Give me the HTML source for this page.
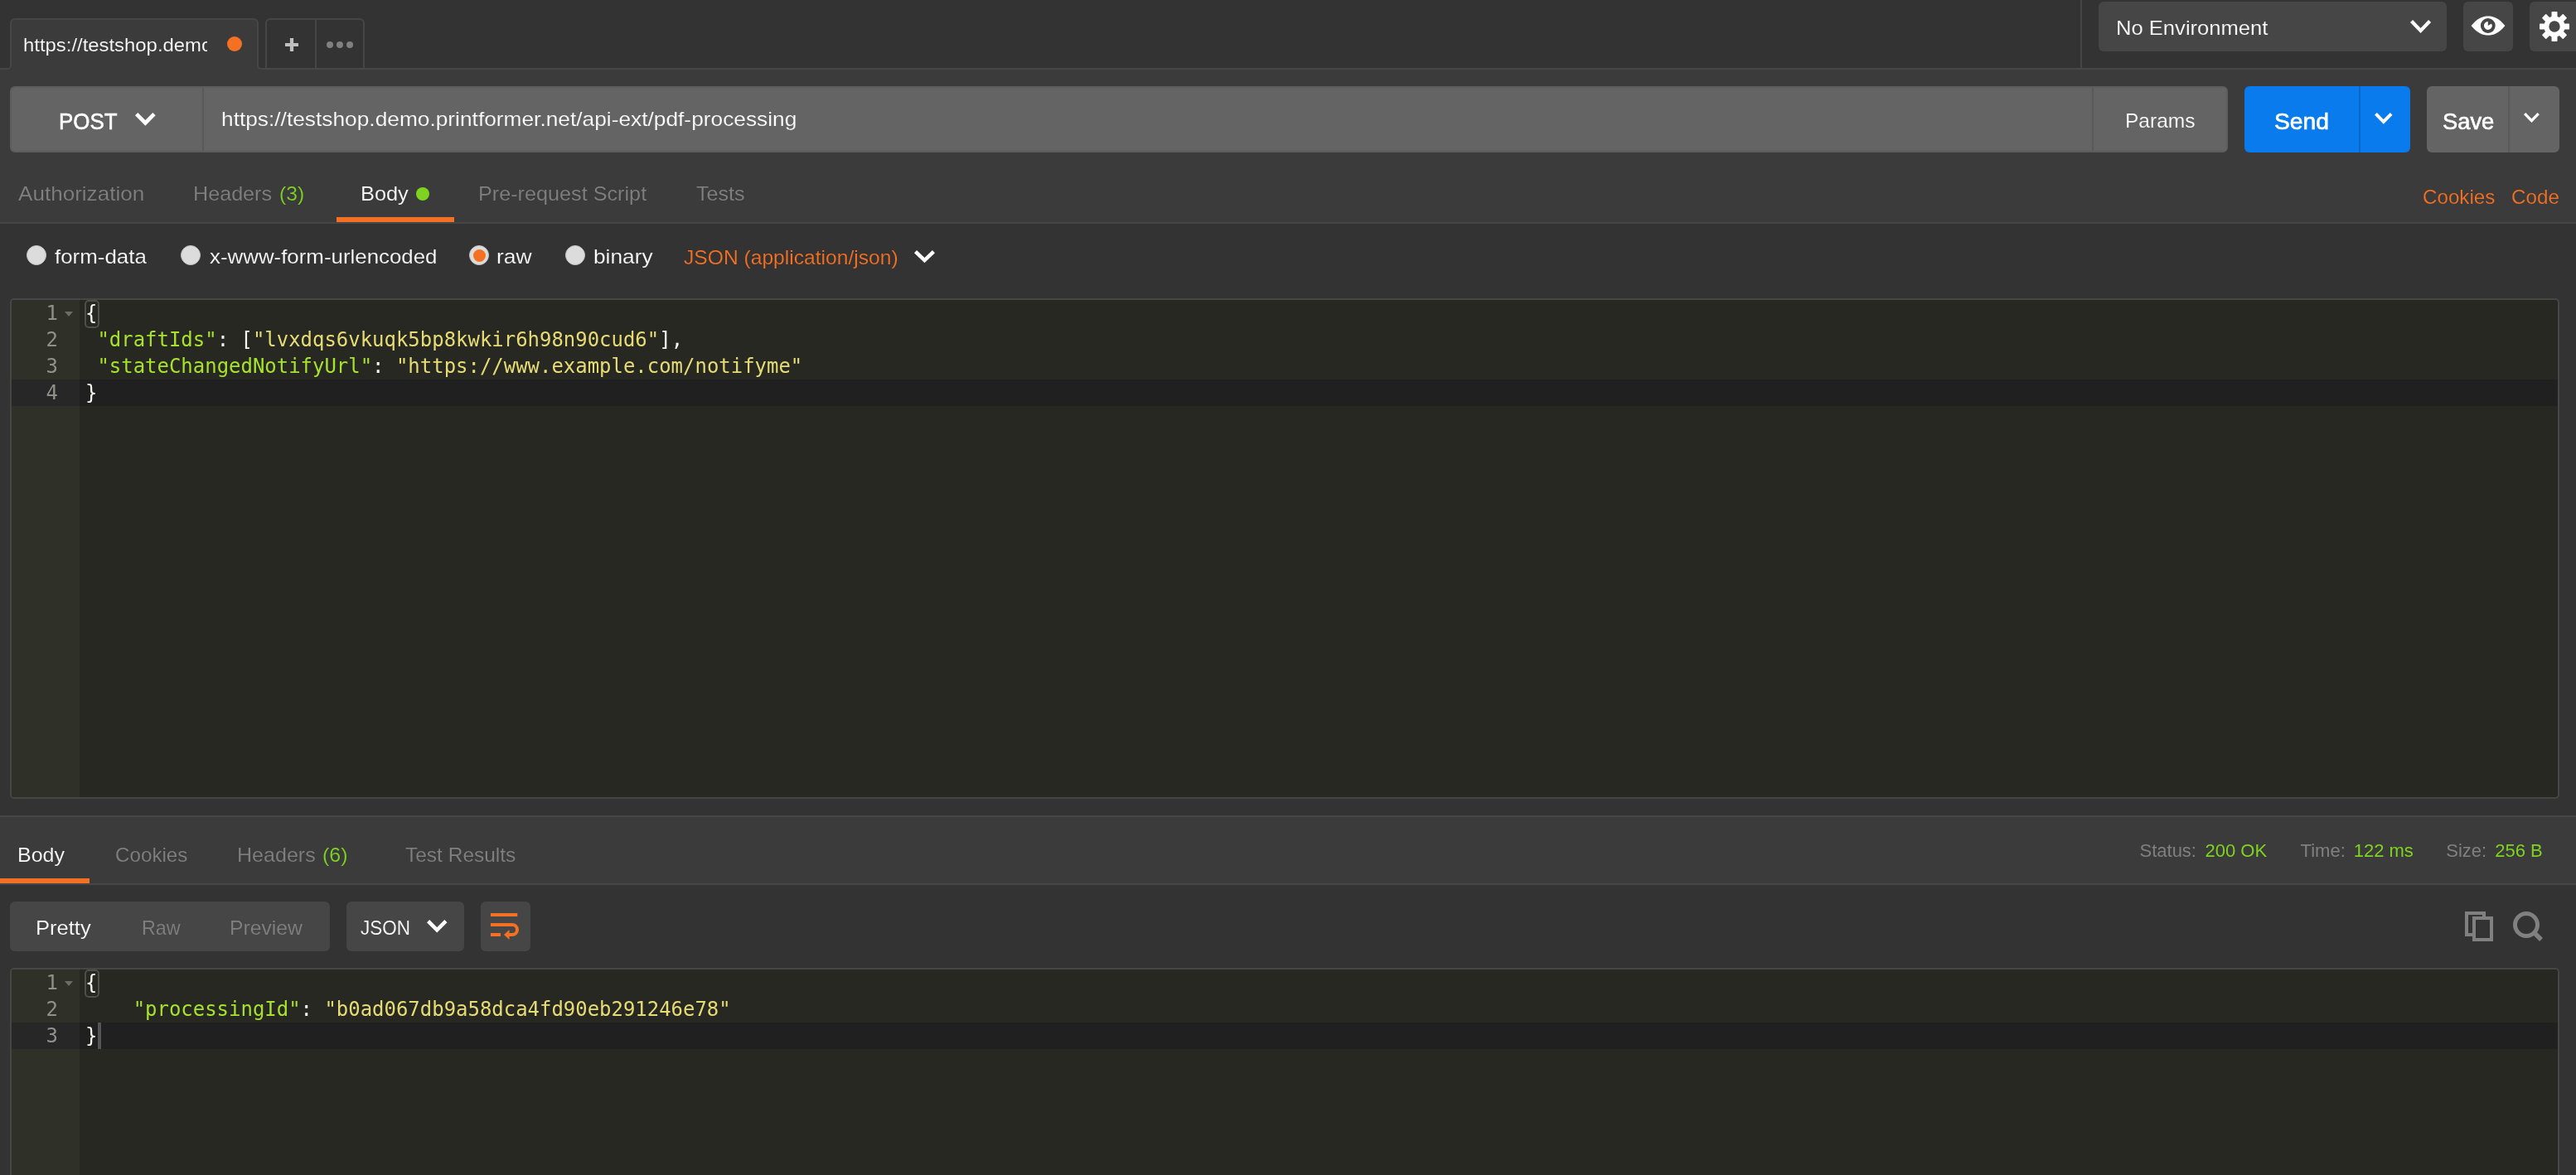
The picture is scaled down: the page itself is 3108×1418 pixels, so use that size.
<!DOCTYPE html>
<html lang='en'><head><meta charset='utf-8'><title>Postman</title>
<style>
*{box-sizing:border-box;margin:0;padding:0}
html,body{width:3108px;height:1418px;overflow:hidden;background:#333333}
body{position:relative;font-family:"Liberation Sans",sans-serif}
.a{position:absolute}
.t{position:absolute;white-space:pre}
.ed{position:absolute;left:12px;width:3076px;border:2px solid #464646;border-radius:5px;background:#272822;overflow:hidden}
.gut{position:absolute;left:0;top:0;bottom:0;width:82px;background:#2f3129}
.ln{position:absolute;left:14px;width:3072px;height:32px;font-family:"DejaVu Sans Mono","Liberation Mono",monospace;font-size:24px;line-height:32px;white-space:pre;color:#f8f8f2}
.ln .n{position:absolute;left:0;width:56px;text-align:right;color:#8f908a;transform:scaleX(0.999);transform-origin:100% 0}
.ln .c{position:absolute;left:89.3px;transform:scaleX(0.998);transform-origin:0 0}
.k{color:#a6e22e} .s{color:#e6db74}
.fold{position:absolute;left:64px;width:0;height:0;border-left:5px solid transparent;border-right:5px solid transparent;border-top:6.5px solid #6b6c65}
.brk{position:absolute;left:88px;width:18px;height:34px;border:2px solid #504f45;border-radius:5px}
#txt{position:absolute;left:0;top:0;width:3108px;height:1418px;will-change:transform}
</style></head>
<body>
<div class='a' style='left:0;top:84px;width:3108px;height:185px;background:#3b3b3b'></div>
<svg class='a' style='left:0;top:20px' width='3108' height='66' viewBox='0 20 3108 66'><path d='M0 83H9a4 4 0 0 0 4-4V28a5 5 0 0 1 5-5H306a5 5 0 0 1 5 5V79a4 4 0 0 0 4 4H3108V86H0Z' fill='#3b3b3b' stroke='none'/><path d='M0 83H9a4 4 0 0 0 4-4V28a5 5 0 0 1 5-5H306a5 5 0 0 1 5 5V79a4 4 0 0 0 4 4H3108' fill='none' stroke='#464646' stroke-width='2'/><path d='M321 82V28a5 5 0 0 1 5-5H434a5 5 0 0 1 5 5V82M381 24V82' fill='none' stroke='#464646' stroke-width='2'/></svg>
<div class='a' style='left:274px;top:44px;width:18px;height:18px;border-radius:50%;background:#f47023'></div>
<svg class='a' style='left:343px;top:45px' width='18' height='18'><path d='M9 1v16M1 9h16' stroke='#c0c0c0' stroke-width='4.2'/></svg>
<div class='a' style='left:394px;top:50px;width:8px;height:8px;border-radius:50%;background:#808080'></div>
<div class='a' style='left:406px;top:50px;width:8px;height:8px;border-radius:50%;background:#808080'></div>
<div class='a' style='left:418px;top:50px;width:8px;height:8px;border-radius:50%;background:#808080'></div>
<div class='a' style='left:2510px;top:0;width:2px;height:82px;background:#464646'></div>
<div class='a' style='left:2532px;top:2px;width:420px;height:60px;border-radius:6px;background:#464646'></div>
<svg class='a' style='left:2906.30px;top:22.00px' width='29.10' height='20.10' viewBox='-2 -2 29.10 20.10'><polyline points='1.52,1.45 12.55,13.05 23.58,1.45' fill='none' stroke='#fff' stroke-width='4.2' stroke-linejoin='miter' stroke-miterlimit='10' stroke-linecap='butt'/></svg>
<div class='a' style='left:2972px;top:2px;width:60px;height:60px;border-radius:6px;background:#464646'></div>
<div class='a' style='left:3052px;top:2px;width:56px;height:60px;border-radius:6px 0 0 6px;background:#464646'></div>
<svg class='a' style='left:2981px;top:19px' width='42' height='24' viewBox='0 0 42 24'><path d='M0.6 12 C 8 2.5, 15 0.4, 21 0.4 S 34 2.5, 41.4 12 C 34 21.5, 27 23.6, 21 23.6 S 8 21.5, 0.6 12Z' fill='#fff'/><circle cx='20.8' cy='12' r='8.9' fill='#464646'/><path d='M20.8 12 L20.8 7.1 A4.9 4.9 0 1 0 25.04 9.55 Z' fill='#fff'/></svg>
<svg class='a' style='left:3062px;top:12px' width='40' height='40' viewBox='-20 -20 40 40'><rect x='-3.5' y='-18' width='7' height='10' rx='0.8' fill='#fff' transform='rotate(0)'/><rect x='-3.5' y='-18' width='7' height='10' rx='0.8' fill='#fff' transform='rotate(45)'/><rect x='-3.5' y='-18' width='7' height='10' rx='0.8' fill='#fff' transform='rotate(90)'/><rect x='-3.5' y='-18' width='7' height='10' rx='0.8' fill='#fff' transform='rotate(135)'/><rect x='-3.5' y='-18' width='7' height='10' rx='0.8' fill='#fff' transform='rotate(180)'/><rect x='-3.5' y='-18' width='7' height='10' rx='0.8' fill='#fff' transform='rotate(225)'/><rect x='-3.5' y='-18' width='7' height='10' rx='0.8' fill='#fff' transform='rotate(270)'/><rect x='-3.5' y='-18' width='7' height='10' rx='0.8' fill='#fff' transform='rotate(315)'/><circle r='12.6' fill='#fff'/><circle r='6.7' fill='#464646'/></svg>
<div class='a' style='left:12px;top:104px;width:2676px;height:80px;border-radius:6px;background:#646464;border:2px solid #5d5d5d'></div>
<div class='a' style='left:244px;top:106px;width:2px;height:76px;background:#5a5a5a'></div>
<div class='a' style='left:2524px;top:106px;width:2px;height:76px;background:#5a5a5a'></div>
<svg class='a' style='left:160.60px;top:134.10px' width='28.70' height='19.80' viewBox='-2 -2 28.70 19.80'><polyline points='1.67,1.65 12.35,12.46 23.03,1.65' fill='none' stroke='#fff' stroke-width='4.7' stroke-linejoin='miter' stroke-miterlimit='10' stroke-linecap='butt'/></svg>
<div class='a' style='left:2708px;top:104px;width:200px;height:80px;border-radius:6px;background:#097bed'></div>
<div class='a' style='left:2846px;top:104px;width:2px;height:80px;background:#0868c9'></div>
<svg class='a' style='left:2863.00px;top:134.20px' width='25.60' height='17.70' viewBox='-2 -2 25.60 17.70'><polyline points='1.42,1.41 10.80,10.86 20.18,1.41' fill='none' stroke='#fff' stroke-width='4' stroke-linejoin='miter' stroke-miterlimit='10' stroke-linecap='butt'/></svg>
<div class='a' style='left:2928px;top:104px;width:160px;height:80px;border-radius:6px;background:#646464'></div>
<div class='a' style='left:3026px;top:104px;width:2px;height:80px;background:#5a5a5a'></div>
<svg class='a' style='left:3043.40px;top:134.20px' width='22.90' height='16.00' viewBox='-2 -2 22.90 16.00'><polyline points='1.18,1.15 9.45,9.64 17.72,1.15' fill='none' stroke='#fff' stroke-width='3.3' stroke-linejoin='miter' stroke-miterlimit='10' stroke-linecap='butt'/></svg>
<div class='a' style='left:406px;top:262px;width:142px;height:6px;background:#f47023'></div>
<div class='a' style='left:0;top:268px;width:3108px;height:2px;background:#464646'></div>
<div class='a' style='left:502px;top:226px;width:16px;height:16px;border-radius:50%;background:#7ed321'></div>
<div class='a' style='left:32px;top:296px;width:24px;height:24px;border-radius:50%;background:#dcdcdc;border:1px solid #c4c4c4'></div>
<div class='a' style='left:218px;top:296px;width:24px;height:24px;border-radius:50%;background:#dcdcdc;border:1px solid #c4c4c4'></div>
<div class='a' style='left:682px;top:296px;width:24px;height:24px;border-radius:50%;background:#dcdcdc;border:1px solid #c4c4c4'></div>
<div class='a' style='left:566px;top:296px;width:24px;height:24px;border-radius:50%;background:#dcdcdc;border:1px solid #c4c4c4'></div>
<div class='a' style='left:570.5px;top:300.5px;width:15px;height:15px;border-radius:50%;background:#f47023'></div>
<svg class='a' style='left:1100.70px;top:300.40px' width='29.00' height='19.20' viewBox='-2 -2 29.00 19.20'><polyline points='1.53,1.59 12.50,12.15 23.47,1.59' fill='none' stroke='#fff' stroke-width='4.4' stroke-linejoin='miter' stroke-miterlimit='10' stroke-linecap='butt'/></svg>
<div class='ed' style='top:360px;height:604px'><div class='gut'></div>
<span class='fold' style='top:14px'></span><span class='brk' style='top:0px'></span>


<div class='a' style='left:0;top:96px;width:3072px;height:32px;background:#202020'></div><div class='a' style='left:0;top:96px;width:82px;height:32px;background:#272727'></div>
</div>
<div class='a' style='left:0;top:984px;width:3108px;height:2px;background:#464646'></div>
<div class='a' style='left:0;top:986px;width:3108px;height:81px;background:#3b3b3b'></div>
<div class='a' style='left:0;top:1060px;width:108px;height:6px;background:#f47023'></div>
<div class='a' style='left:0;top:1066px;width:3108px;height:2px;background:#464646'></div>
<div class='a' style='left:12px;top:1088px;width:386px;height:60px;border-radius:6px;background:#464646'></div>
<div class='a' style='left:418px;top:1088px;width:142px;height:60px;border-radius:6px;background:#464646'></div>
<svg class='a' style='left:512.70px;top:1108.40px' width='28.50' height='19.50' viewBox='-2 -2 28.50 19.50'><polyline points='1.60,1.59 12.25,12.31 22.90,1.59' fill='none' stroke='#fff' stroke-width='4.5' stroke-linejoin='miter' stroke-miterlimit='10' stroke-linecap='butt'/></svg>
<div class='a' style='left:580px;top:1088px;width:60px;height:60px;border-radius:6px;background:#464646'></div>
<svg class='a' style='left:588px;top:1098px' width='44' height='40' viewBox='588 1098 44 40'><path d='M592 1104H624.2M592 1116H618M592 1128H604' stroke='#f47023' stroke-width='4' fill='none'/><path d='M618 1116 a6 6 0 0 1 0 12 H613' stroke='#f47023' stroke-width='4' fill='none'/><path d='M608 1128 L614.5 1122 V1134Z' fill='#f47023'/></svg>
<svg class='a' style='left:2970px;top:1096px' width='104' height='44' viewBox='2970 1096 104 44'><rect x='2976' y='1102' width='21' height='26' fill='none' stroke='#808080' stroke-width='4'/><rect x='2985' y='1108' width='21' height='26' fill='#333333' stroke='#808080' stroke-width='4'/><circle cx='3048' cy='1116' r='13.5' fill='none' stroke='#808080' stroke-width='5'/><path d='M3057 1125 L3066 1134' stroke='#808080' stroke-width='5.5' stroke-linecap='butt'/></svg>
<div class='ed' style='top:1168px;height:250px;border-bottom:none;border-radius:5px 5px 0 0'><div class='gut'></div>
<span class='fold' style='top:14px'></span><span class='brk' style='top:0px'></span>

<div class='a' style='left:0;top:64px;width:3072px;height:32px;background:#202020'></div><div class='a' style='left:0;top:64px;width:82px;height:32px;background:#272727'></div><span class='a' style='left:104px;top:64px;width:4px;height:32px;background:#555555'></span>
</div>
<div id='txt'>
<div class='a' style='left:20px;top:30px;width:229.6px;height:44px;overflow:hidden'><div class='t' id='tabt' style='left:7.61px;top:14.10px;transform:scaleX(1.0850);transform-origin:0 0;font-family:"Liberation Sans", sans-serif;font-size:22px;font-weight:400;color:#ffffff;letter-spacing:0.000px;line-height:22px;-webkit-text-stroke:0.15px #3b3b3b;'>https://testshop.demo</div></div>
<div class='t' id='post' style='left:70.75px;top:133.00px;transform:scaleX(0.9243);transform-origin:0 0;font-family:"Liberation Sans", sans-serif;font-size:28px;font-weight:400;color:#ffffff;letter-spacing:0.000px;line-height:28px;-webkit-text-stroke:0.6px #ffffff;'>POST</div>
<div class='t' id='url' style='left:266.81px;top:132.00px;transform:scaleX(1.0957);transform-origin:0 0;font-family:"Liberation Sans", sans-serif;font-size:24px;font-weight:400;color:#ffffff;letter-spacing:0.000px;line-height:24px;-webkit-text-stroke:0.15px #646464;'>https://testshop.demo.printformer.net/api-ext/pdf-processing</div>
<div class='t' id='params' style='left:2563.66px;top:134.20px;transform:scaleX(1.0213);transform-origin:0 0;font-family:"Liberation Sans", sans-serif;font-size:24px;font-weight:400;color:#ffffff;letter-spacing:0.000px;line-height:24px;-webkit-text-stroke:0.15px #646464;'>Params</div>
<div class='t' id='send' style='left:2743.79px;top:133.00px;transform:scaleX(1.0095);transform-origin:0 0;font-family:"Liberation Sans", sans-serif;font-size:28px;font-weight:400;color:#ffffff;letter-spacing:0.000px;line-height:28px;-webkit-text-stroke:0.65px #ffffff;'>Send</div>
<div class='t' id='save' style='left:2946.52px;top:133.00px;transform:scaleX(0.9758);transform-origin:0 0;font-family:"Liberation Sans", sans-serif;font-size:28px;font-weight:400;color:#ffffff;letter-spacing:0.000px;line-height:28px;-webkit-text-stroke:0.65px #ffffff;'>Save</div>
<div class='t' id='env' style='left:2553.47px;top:22.30px;transform:scaleX(1.0659);transform-origin:0 0;font-family:"Liberation Sans", sans-serif;font-size:24px;font-weight:400;color:#ffffff;letter-spacing:0.000px;line-height:24px;-webkit-text-stroke:0.15px #464646;'>No Environment</div>
<div class='t' id='auth' style='left:22.00px;top:222.00px;transform:scaleX(1.0863);transform-origin:0 0;font-family:"Liberation Sans", sans-serif;font-size:24px;font-weight:400;color:#808080;letter-spacing:0.000px;line-height:24px;-webkit-text-stroke:0.15px #3b3b3b;'>Authorization</div>
<div class='t' id='hdr' style='left:232.70px;top:222.00px;transform:scaleX(1.0477);transform-origin:0 0;font-family:"Liberation Sans", sans-serif;font-size:24px;font-weight:400;color:#808080;letter-spacing:0.000px;line-height:24px;-webkit-text-stroke:0.15px #3b3b3b;'>Headers</div>
<div class='t' id='hdr3' style='left:336.97px;top:222.00px;transform:scaleX(1.0259);transform-origin:0 0;font-family:"Liberation Sans", sans-serif;font-size:24px;font-weight:400;color:#7ed321;letter-spacing:0.000px;line-height:24px;-webkit-text-stroke:0.15px #3b3b3b;'>(3)</div>
<div class='t' id='body' style='left:434.59px;top:222.00px;transform:scaleX(1.0566);transform-origin:0 0;font-family:"Liberation Sans", sans-serif;font-size:24px;font-weight:400;color:#ffffff;letter-spacing:0.000px;line-height:24px;-webkit-text-stroke:0.15px #3b3b3b;'>Body</div>
<div class='t' id='prs' style='left:577.20px;top:222.00px;transform:scaleX(1.0503);transform-origin:0 0;font-family:"Liberation Sans", sans-serif;font-size:24px;font-weight:400;color:#808080;letter-spacing:0.000px;line-height:24px;-webkit-text-stroke:0.15px #3b3b3b;'>Pre-request Script</div>
<div class='t' id='tests' style='left:839.70px;top:222.00px;transform:scaleX(1.0473);transform-origin:0 0;font-family:"Liberation Sans", sans-serif;font-size:24px;font-weight:400;color:#808080;letter-spacing:0.000px;line-height:24px;-webkit-text-stroke:0.15px #3b3b3b;'>Tests</div>
<div class='t' id='cook' style='left:2922.69px;top:225.70px;transform:scaleX(1.0071);transform-origin:0 0;font-family:"Liberation Sans", sans-serif;font-size:24px;font-weight:400;color:#f47023;letter-spacing:0.000px;line-height:24px;-webkit-text-stroke:0.15px #3b3b3b;'>Cookies</div>
<div class='t' id='code' style='left:3030.39px;top:225.70px;transform:scaleX(1.0109);transform-origin:0 0;font-family:"Liberation Sans", sans-serif;font-size:24px;font-weight:400;color:#f47023;letter-spacing:0.000px;line-height:24px;-webkit-text-stroke:0.15px #3b3b3b;'>Code</div>
<div class='t' id='fd' style='left:66.40px;top:297.50px;transform:scaleX(1.0786);transform-origin:0 0;font-family:"Liberation Sans", sans-serif;font-size:24px;font-weight:400;color:#ffffff;letter-spacing:0.000px;line-height:24px;-webkit-text-stroke:0.15px #333333;'>form-data</div>
<div class='t' id='xw' style='left:252.70px;top:297.50px;transform:scaleX(1.0775);transform-origin:0 0;font-family:"Liberation Sans", sans-serif;font-size:24px;font-weight:400;color:#ffffff;letter-spacing:0.000px;line-height:24px;-webkit-text-stroke:0.15px #333333;'>x-www-form-urlencoded</div>
<div class='t' id='raw' style='left:598.79px;top:297.50px;transform:scaleX(1.1027);transform-origin:0 0;font-family:"Liberation Sans", sans-serif;font-size:24px;font-weight:400;color:#ffffff;letter-spacing:0.000px;line-height:24px;-webkit-text-stroke:0.15px #333333;'>raw</div>
<div class='t' id='bin' style='left:715.50px;top:297.50px;transform:scaleX(1.0953);transform-origin:0 0;font-family:"Liberation Sans", sans-serif;font-size:24px;font-weight:400;color:#ffffff;letter-spacing:0.000px;line-height:24px;-webkit-text-stroke:0.15px #333333;'>binary</div>
<div class='t' id='jsonapp' style='left:825.07px;top:299.30px;transform:scaleX(1.0260);transform-origin:0 0;font-family:"Liberation Sans", sans-serif;font-size:24px;font-weight:400;color:#f47023;letter-spacing:0.000px;line-height:24px;-webkit-text-stroke:0.15px #333333;'>JSON (application/json)</div>
<div class='t' id='rbody' style='left:21.42px;top:1019.90px;transform:scaleX(1.0396);transform-origin:0 0;font-family:"Liberation Sans", sans-serif;font-size:24px;font-weight:400;color:#ffffff;letter-spacing:0.000px;line-height:24px;-webkit-text-stroke:0.15px #3b3b3b;'>Body</div>
<div class='t' id='rcook' style='left:139.09px;top:1019.90px;transform:scaleX(1.0082);transform-origin:0 0;font-family:"Liberation Sans", sans-serif;font-size:24px;font-weight:400;color:#808080;letter-spacing:0.000px;line-height:24px;-webkit-text-stroke:0.15px #3b3b3b;'>Cookies</div>
<div class='t' id='rhdr' style='left:285.51px;top:1019.90px;transform:scaleX(1.0443);transform-origin:0 0;font-family:"Liberation Sans", sans-serif;font-size:24px;font-weight:400;color:#808080;letter-spacing:0.000px;line-height:24px;-webkit-text-stroke:0.15px #3b3b3b;'>Headers</div>
<div class='t' id='rhdr6' style='left:389.46px;top:1019.90px;transform:scaleX(1.0444);transform-origin:0 0;font-family:"Liberation Sans", sans-serif;font-size:24px;font-weight:400;color:#7ed321;letter-spacing:0.000px;line-height:24px;-webkit-text-stroke:0.15px #3b3b3b;'>(6)</div>
<div class='t' id='tres' style='left:488.60px;top:1019.90px;transform:scaleX(1.0200);transform-origin:0 0;font-family:"Liberation Sans", sans-serif;font-size:24px;font-weight:400;color:#808080;letter-spacing:0.000px;line-height:24px;-webkit-text-stroke:0.15px #3b3b3b;'>Test Results</div>
<div class='t' id='pretty' style='left:43.47px;top:1108.00px;transform:scaleX(1.0639);transform-origin:0 0;font-family:"Liberation Sans", sans-serif;font-size:24px;font-weight:400;color:#ffffff;letter-spacing:0.000px;line-height:24px;-webkit-text-stroke:0.15px #464646;'>Pretty</div>
<div class='t' id='rraw' style='left:170.56px;top:1108.00px;transform:scaleX(0.9717);transform-origin:0 0;font-family:"Liberation Sans", sans-serif;font-size:24px;font-weight:400;color:#808080;letter-spacing:0.000px;line-height:24px;-webkit-text-stroke:0.15px #464646;'>Raw</div>
<div class='t' id='prev' style='left:277.44px;top:1108.00px;transform:scaleX(1.0301);transform-origin:0 0;font-family:"Liberation Sans", sans-serif;font-size:24px;font-weight:400;color:#808080;letter-spacing:0.000px;line-height:24px;-webkit-text-stroke:0.15px #464646;'>Preview</div>
<div class='t' id='json' style='left:434.56px;top:1107.90px;transform:scaleX(0.9361);transform-origin:0 0;font-family:"Liberation Sans", sans-serif;font-size:24px;font-weight:400;color:#ffffff;letter-spacing:0.000px;line-height:24px;-webkit-text-stroke:0.15px #464646;'>JSON</div>
<div class='t' id='st' style='left:2581.50px;top:1016.20px;font-family:"Liberation Sans", sans-serif;font-size:22px;font-weight:400;color:#808080;letter-spacing:0.000px;line-height:22px;'>Status:</div>
<div class='t' id='stv' style='left:2660.50px;top:1016.20px;font-family:"Liberation Sans", sans-serif;font-size:22px;font-weight:400;color:#7ed321;letter-spacing:0.000px;line-height:22px;'>200 OK</div>
<div class='t' id='tm' style='left:2775.60px;top:1016.20px;font-family:"Liberation Sans", sans-serif;font-size:22px;font-weight:400;color:#808080;letter-spacing:0.000px;line-height:22px;'>Time:</div>
<div class='t' id='tmv' style='left:2839.70px;top:1016.20px;font-family:"Liberation Sans", sans-serif;font-size:22px;font-weight:400;color:#7ed321;letter-spacing:0.000px;line-height:22px;'>122 ms</div>
<div class='t' id='sz' style='left:2951.30px;top:1016.20px;font-family:"Liberation Sans", sans-serif;font-size:22px;font-weight:400;color:#808080;letter-spacing:0.000px;line-height:22px;'>Size:</div>
<div class='t' id='szv' style='left:3010.30px;top:1016.20px;font-family:"Liberation Sans", sans-serif;font-size:22px;font-weight:400;color:#7ed321;letter-spacing:0.000px;line-height:22px;'>256 B</div>
<div class='ln' style='top:362px'><span class='n'>1</span><span class='c'>{</span></div>
<div class='ln' style='top:394px'><span class='n'>2</span><span class='c'> <span class='k'>&quot;draftIds&quot;</span>: [<span class='s'>&quot;lvxdqs6vkuqk5bp8kwkir6h98n90cud6&quot;</span>],</span></div>
<div class='ln' style='top:426px'><span class='n'>3</span><span class='c'> <span class='k'>&quot;stateChangedNotifyUrl&quot;</span>: <span class='s'>&quot;https://www.example.com/notifyme&quot;</span></span></div>
<div class='ln' style='top:458px'><span class='n'>4</span><span class='c'>}</span></div>
<div class='ln' style='top:1170px'><span class='n'>1</span><span class='c'>{</span></div>
<div class='ln' style='top:1202px'><span class='n'>2</span><span class='c'>    <span class='k'>&quot;processingId&quot;</span>: <span class='s'>&quot;b0ad067db9a58dca4fd90eb291246e78&quot;</span></span></div>
<div class='ln' style='top:1234px'><span class='n'>3</span><span class='c'>}</span></div>
</div>
</body></html>
